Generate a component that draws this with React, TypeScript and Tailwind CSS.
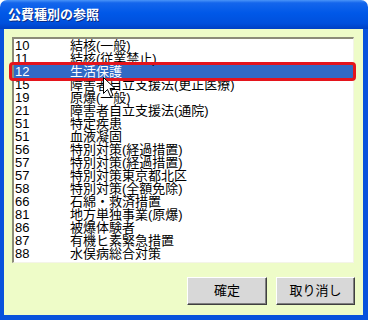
import React from "react";

const rows: [string, string][] = [
  ["10", "結核(一般)"],
  ["11", "結核(従業禁止)"],
  ["12", "生活保護"],
  ["15", "障害者自立支援法(更正医療)"],
  ["19", "原爆(一般)"],
  ["21", "障害者自立支援法(通院)"],
  ["51", "特定疾患"],
  ["51", "血液凝固"],
  ["56", "特別対策(経過措置)"],
  ["57", "特別対策(経過措置)"],
  ["57", "特別対策東京都北区"],
  ["58", "特別対策(全額免除)"],
  ["66", "石綿・救済措置"],
  ["81", "地方単独事業(原爆)"],
  ["86", "被爆体験者"],
  ["87", "有機ヒ素緊急措置"],
  ["88", "水俣病総合対策"],
];

export default function App() {
  return (
    <div className="w-[368px] h-[320px] flex flex-col font-['Liberation_Sans','Noto_Sans_CJK_JP',sans-serif] text-[13px] text-black">
      {/* title bar */}
      <div className="h-[29px] rounded-t-[7px] bg-[linear-gradient(to_bottom,#4a94f8_0%,#1466ec_10%,#0058e8_45%,#0050dd_80%,#0040c4_100%)] px-[8px] flex items-center text-white font-bold text-[13px] [text-shadow:1px_1px_#0b2a84]">
        公費種別の参照
      </div>

      {/* frame */}
      <div className="flex-1 flex bg-[#0852dc] pl-[4px] pr-[5px] pb-[5px]">
        <div className="relative flex-1 flex flex-col bg-[#eefcc8] pt-[8px] pl-[8px] pr-[8px] pb-[10px]">
          <div className="h-[226px] mr-px bg-white border-t-2 border-l-2 border-[#8c8c78] border-r border-b border-r-[#f4f4e8] border-b-[#f4f4e8] overflow-hidden">
            {rows.map(([code, name], i) => (
              <div
                key={i}
                className={
                  "flex h-[13px] leading-[13px] whitespace-nowrap " +
                  (i === 2 ? "bg-[#316ac5] text-white" : "")
                }
              >
                <span className="w-[56px] pl-[1px]">{code}</span>
                <span>{name}</span>
              </div>
            ))}
          </div>

          <div className="mt-[14px] flex justify-end gap-[9px]">
            <button className="w-[80px] h-[28px] bg-[#d8d8d8] border border-t-white border-l-white border-r-[#404040] border-b-[#404040] shadow-[inset_-1px_-1px_0_#808080]">
              確定
            </button>
            <button className="w-[79px] h-[28px] bg-[#d8d8d8] border border-t-white border-l-white border-r-[#404040] border-b-[#404040] shadow-[inset_-1px_-1px_0_#808080]">
              取り消し
            </button>
          </div>

          {/* red highlight around selected row */}
          <div className="absolute left-[5px] top-[33px] w-[347px] h-[19px] rounded-[4px] border-[3px] border-[#e4141c]" />

          {/* mouse cursor */}
          <svg
            className="absolute left-[99px] top-[48px]"
            width="13"
            height="21"
            viewBox="0 0 13 21"
          >
            <path
              d="M0.5 0.5 L0.5 16.5 L4.5 12.5 L7.5 19.5 L10 18.5 L7 11.5 L12 11.5 Z"
              fill="white"
              stroke="black"
              strokeWidth="1"
            />
          </svg>
        </div>
      </div>
    </div>
  );
}
